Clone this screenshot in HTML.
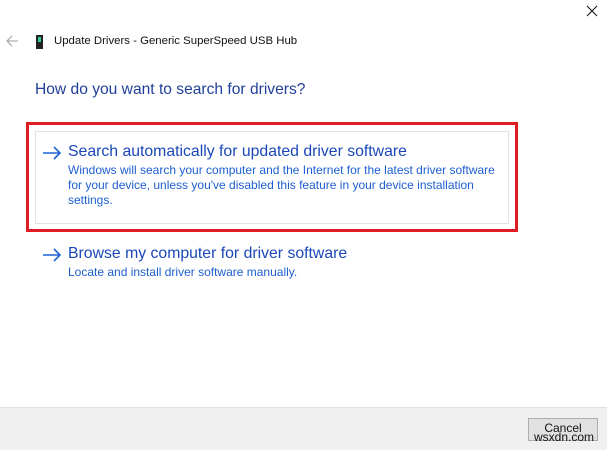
<!DOCTYPE html>
<html><head><meta charset="utf-8"><style>
body{margin:0;width:607px;height:449px;background:#fff;font-family:"Liberation Sans",sans-serif;position:relative;overflow:hidden}
.a{position:absolute}
.t{color:#1a47b8}
.d{color:#1d5fd0;font-size:12px;line-height:15px}
</style></head><body>
<svg class="a" style="left:586px;top:5px" width="12" height="12"><path d="M1 1L11 11M11 1L1 11" stroke="#222" stroke-width="1.2"/></svg>
<svg class="a" style="left:4px;top:34px" width="16" height="14"><path d="M14 7H3M8 2L3 7l5 5" stroke="#b0b0b0" stroke-width="1.3" fill="none"/></svg>
<svg class="a" style="left:35px;top:34px" width="10" height="16"><rect x="1" y="1" width="7" height="14" fill="#222"/><rect x="3" y="3" width="3" height="5" fill="#3c9"/></svg>
<div class="a" style="left:54px;top:35px;font-size:11.4px;color:#111">Update Drivers - Generic SuperSpeed USB Hub</div>
<div class="a" style="left:35px;top:81px;font-size:15.6px;color:#1f3f9a">How do you want to search for drivers?</div>
<div class="a" style="left:26px;top:122px;width:486px;height:104px;border:3px solid #e01d25"></div>
<div class="a" style="left:35px;top:131px;width:472px;height:91px;border:1px solid #e3e3e3"></div>
<svg class="a" style="left:42px;top:146px" width="20" height="14"><path d="M1 7H18M12 1l6 6-6 6" stroke="#1e64d6" stroke-width="1.6" fill="none"/></svg>
<div class="a t" style="left:68px;top:143px;font-size:15.8px">Search automatically for updated driver software</div>
<div class="a d" style="left:68px;top:163px">Windows will search your computer and the Internet for the latest driver software<br>for your device, unless you've disabled this feature in your device installation<br>settings.</div>
<svg class="a" style="left:42px;top:248px" width="20" height="14"><path d="M1 7H18M12 1l6 6-6 6" stroke="#1e64d6" stroke-width="1.6" fill="none"/></svg>
<div class="a t" style="left:68px;top:245px;font-size:15.8px">Browse my computer for driver software</div>
<div class="a d" style="left:68px;top:265px">Locate and install driver software manually.</div>
<div class="a" style="left:0;top:407px;width:607px;height:42px;background:#f0f0f0;border-top:1px solid #dfdfdf"></div>
<div class="a" style="left:528px;top:418px;width:68px;height:21px;background:#e1e1e1;border:1px solid #adadad;font-size:12px;text-align:center;line-height:18px;color:#111">Cancel</div>
<div class="a" style="left:534px;top:430px;font-size:12px;color:#111">wsxdn.com</div>
</body></html>
